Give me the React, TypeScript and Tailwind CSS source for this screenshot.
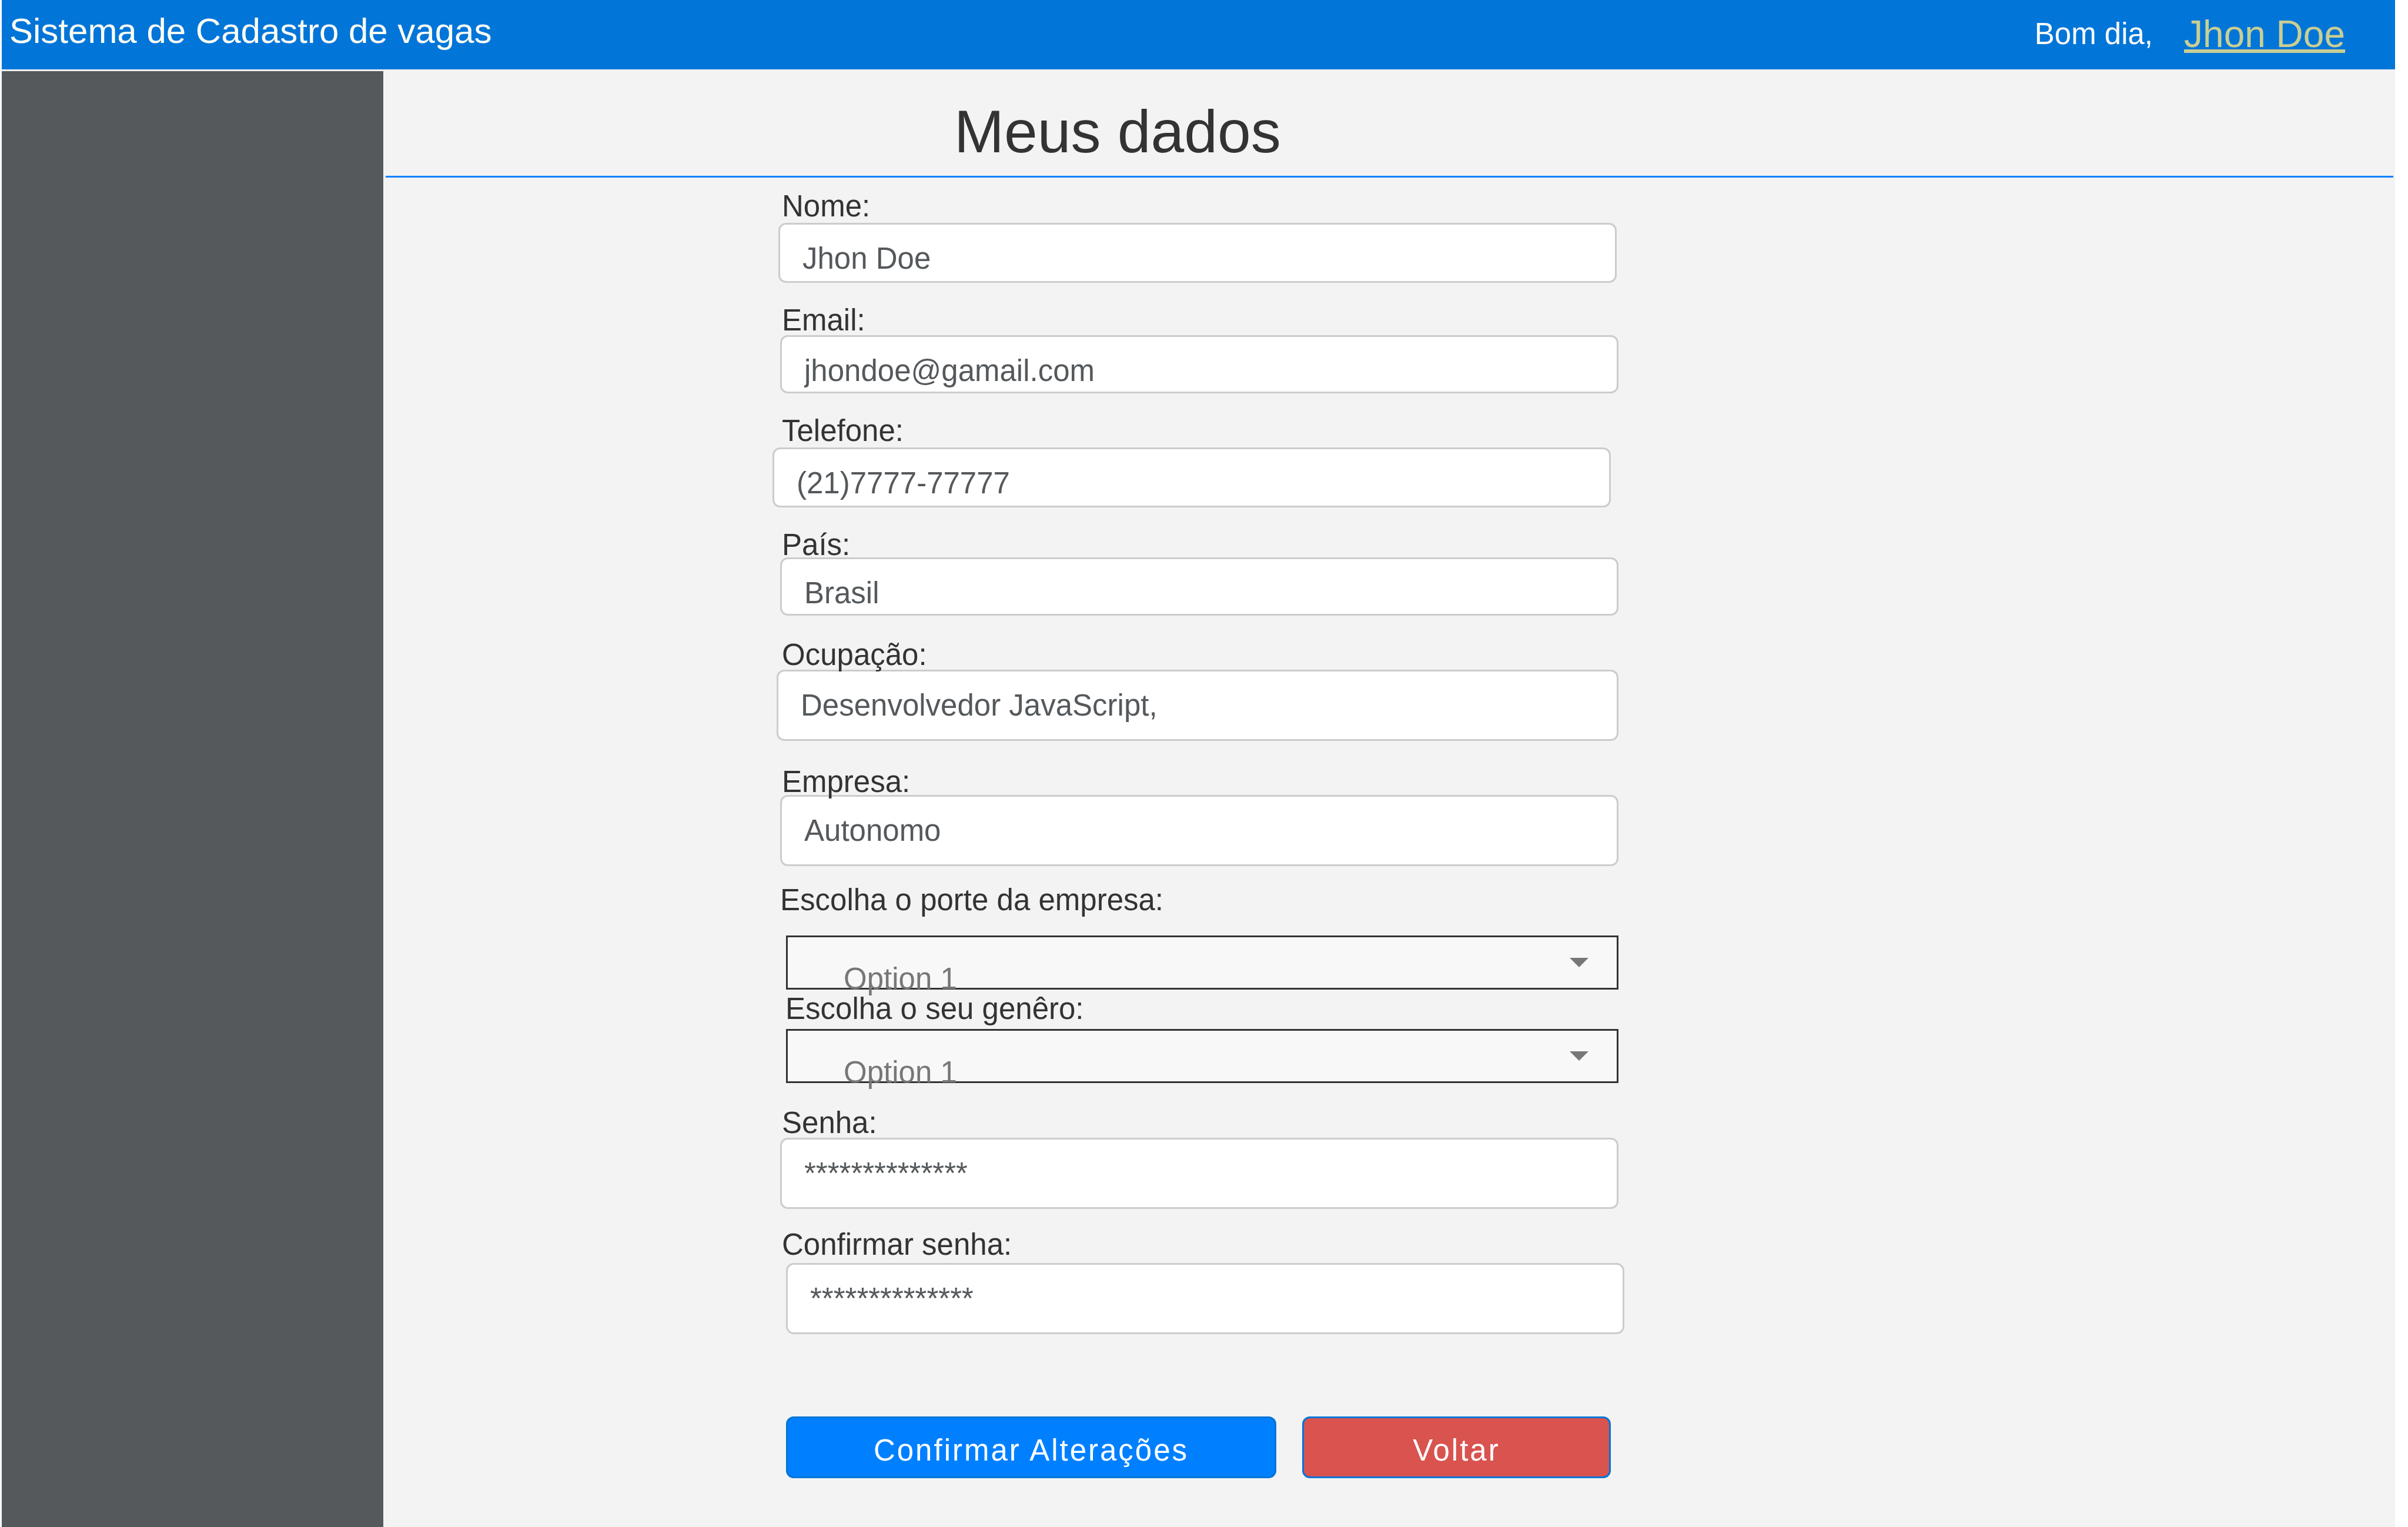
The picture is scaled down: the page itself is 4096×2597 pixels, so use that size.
import { useState } from 'react';

type FieldProps = {
  id: string;
  label: string;
  initial: string;
  group: string;
  labelClass?: string;
  inputClass: string;
};

const labelBase =
  'relative z-10 block w-fit text-[51px] leading-[46px] whitespace-nowrap text-[#333333]';

function Field({ id, label, initial, group, labelClass = 'ml-4', inputClass }: FieldProps) {
  const [value, setValue] = useState(initial);
  return (
    <div className={group}>
      <label htmlFor={id} className={`${labelBase} ${labelClass}`}>
        {label}
      </label>
      <input
        id={id}
        type="text"
        autoComplete="off"
        value={value}
        onChange={(e) => setValue(e.target.value)}
        className={`block w-full rounded-[13px] border-3 border-[#cccccc] bg-white pt-7 pr-9 pl-[38px] text-[51px] leading-[60px] text-[#55595c] outline-none ${inputClass}`}
      />
    </div>
  );
}

type SelectFieldProps = { id: string; label: string; group: string; labelClass: string };

function SelectField({ id, label, group, labelClass }: SelectFieldProps) {
  return (
    <div className={group}>
      <label htmlFor={id} className={`${labelBase} ${labelClass}`}>
        {label}
      </label>
      <div className="relative ml-[23px] h-[92px] max-w-[1416px] border-3 border-[#333333] bg-[#f8f8f8]">
        <select
          id={id}
          className="absolute inset-x-0 top-0 h-[104px] w-full appearance-none bg-transparent pt-[38px] pl-[95px] text-[51px] leading-[60px] text-[#777777] outline-none"
        >
          <option>Option 1</option>
          <option>Option 2</option>
          <option>Option 3</option>
        </select>
        <svg
          viewBox="0 0 32 16"
          className="pointer-events-none absolute top-[35px] right-[48px] h-4 w-8 fill-[#777777]"
          aria-hidden="true"
        >
          <path d="M0 0h32L16 16z" />
        </svg>
      </div>
    </div>
  );
}

const buttonBase =
  'h-[105px] rounded-[13px] border-3 border-[#0275d8] pt-[10px] text-center text-[51px] leading-[60px] tracking-[3px] whitespace-nowrap text-white';

export default function App() {
  return (
    <div className="min-h-screen bg-white pr-[22px] pl-[3px] font-['Liberation_Sans',Arial,sans-serif]">
      <div className="flex min-h-screen flex-col bg-[#f3f3f3]">
        <header className="flex h-[118px] items-start justify-between bg-[#0275d8] pr-[85px] pl-[13px]">
          <span className="text-[60px] leading-[105px] whitespace-nowrap text-[#fdfdf5]">
            Sistema de Cadastro de vagas
          </span>
          <div className="flex items-start gap-[53px] whitespace-nowrap">
            <span className="text-[51px] leading-[115px] text-[#fafafa]">Bom dia,</span>
            <a
              href="#perfil"
              className="text-[64px] leading-[116px] text-[#c9ce93] underline decoration-[6px] underline-offset-[4px] [text-decoration-skip-ink:none]"
            >
              Jhon Doe
            </a>
          </div>
        </header>

        <div className="flex flex-1 gap-1 pt-[3px]">
          <aside className="w-[649px] shrink-0 bg-[#55595c]" />

          <main className="min-w-0 flex-1">
            <div className="mr-[3px] h-[181px] border-b-3 border-[#0080ff] pl-[967px]">
              <h1 className="text-[102px] leading-[206px] whitespace-nowrap text-[#333333]">
                Meus dados
              </h1>
            </div>

            <form
              className="ml-[658px] max-w-[1449px] pt-[26px]"
              onSubmit={(e) => e.preventDefault()}
            >
              <Field
                id="nome"
                label="Nome:"
                initial="Jhon Doe"
                group=""
                inputClass="mt-[5px] ml-[10px] max-w-[1426px] pb-[8px]"
              />
              <Field
                id="email"
                label="Email:"
                initial="jhondoe@gamail.com"
                group="mt-[41px]"
                inputClass="mt-[2px] ml-[13px] max-w-[1426px] pb-[5px]"
              />
              <Field
                id="telefone"
                label="Telefone:"
                initial="(21)7777-77777"
                group="mt-[41px]"
                inputClass="mt-[5px] max-w-[1426px] pb-[8px]"
              />
              <Field
                id="pais"
                label="País:"
                initial="Brasil"
                group="mt-[41px]"
                inputClass="-mt-[2px] ml-[13px] max-w-[1426px] pb-[5px]"
              />
              <Field
                id="ocupacao"
                label="Ocupação:"
                initial="Desenvolvedor JavaScript,"
                group="mt-[44px]"
                inputClass="mt-[2px] ml-[7px] max-w-[1432px] pb-[27px]"
              />
              <Field
                id="empresa"
                label="Empresa:"
                initial="Autonomo"
                group="mt-[47px]"
                inputClass="-mt-px ml-[13px] max-w-[1426px] pb-[27px]"
              />
              <SelectField
                id="porte"
                label="Escolha o porte da empresa:"
                group="mt-[35px]"
                labelClass="ml-[13px] mb-[37px]"
              />
              <SelectField
                id="genero"
                label="Escolha o seu genêro:"
                group="mt-[10px]"
                labelClass="ml-[22px] mb-[11px]"
              />
              <Field
                id="senha"
                label="Senha:"
                initial="**************"
                group="mt-[45px]"
                inputClass="mt-[2px] ml-[13px] max-w-[1426px] pb-[27px]"
              />
              <Field
                id="confirmar-senha"
                label="Confirmar senha:"
                initial="**************"
                group="mt-[38px]"
                inputClass="mt-[8px] ml-[23px] max-w-[1426px] pb-[27px]"
              />

              <div className="mt-[140px] ml-[23px] flex gap-[44px]">
                <button type="submit" className={`${buttonBase} w-[834px] bg-[#0080ff]`}>
                  Confirmar Alterações
                </button>
                <button type="button" className={`${buttonBase} w-[525px] bg-[#d9534f]`}>
                  Voltar
                </button>
              </div>
            </form>
          </main>
        </div>
      </div>
    </div>
  );
}
